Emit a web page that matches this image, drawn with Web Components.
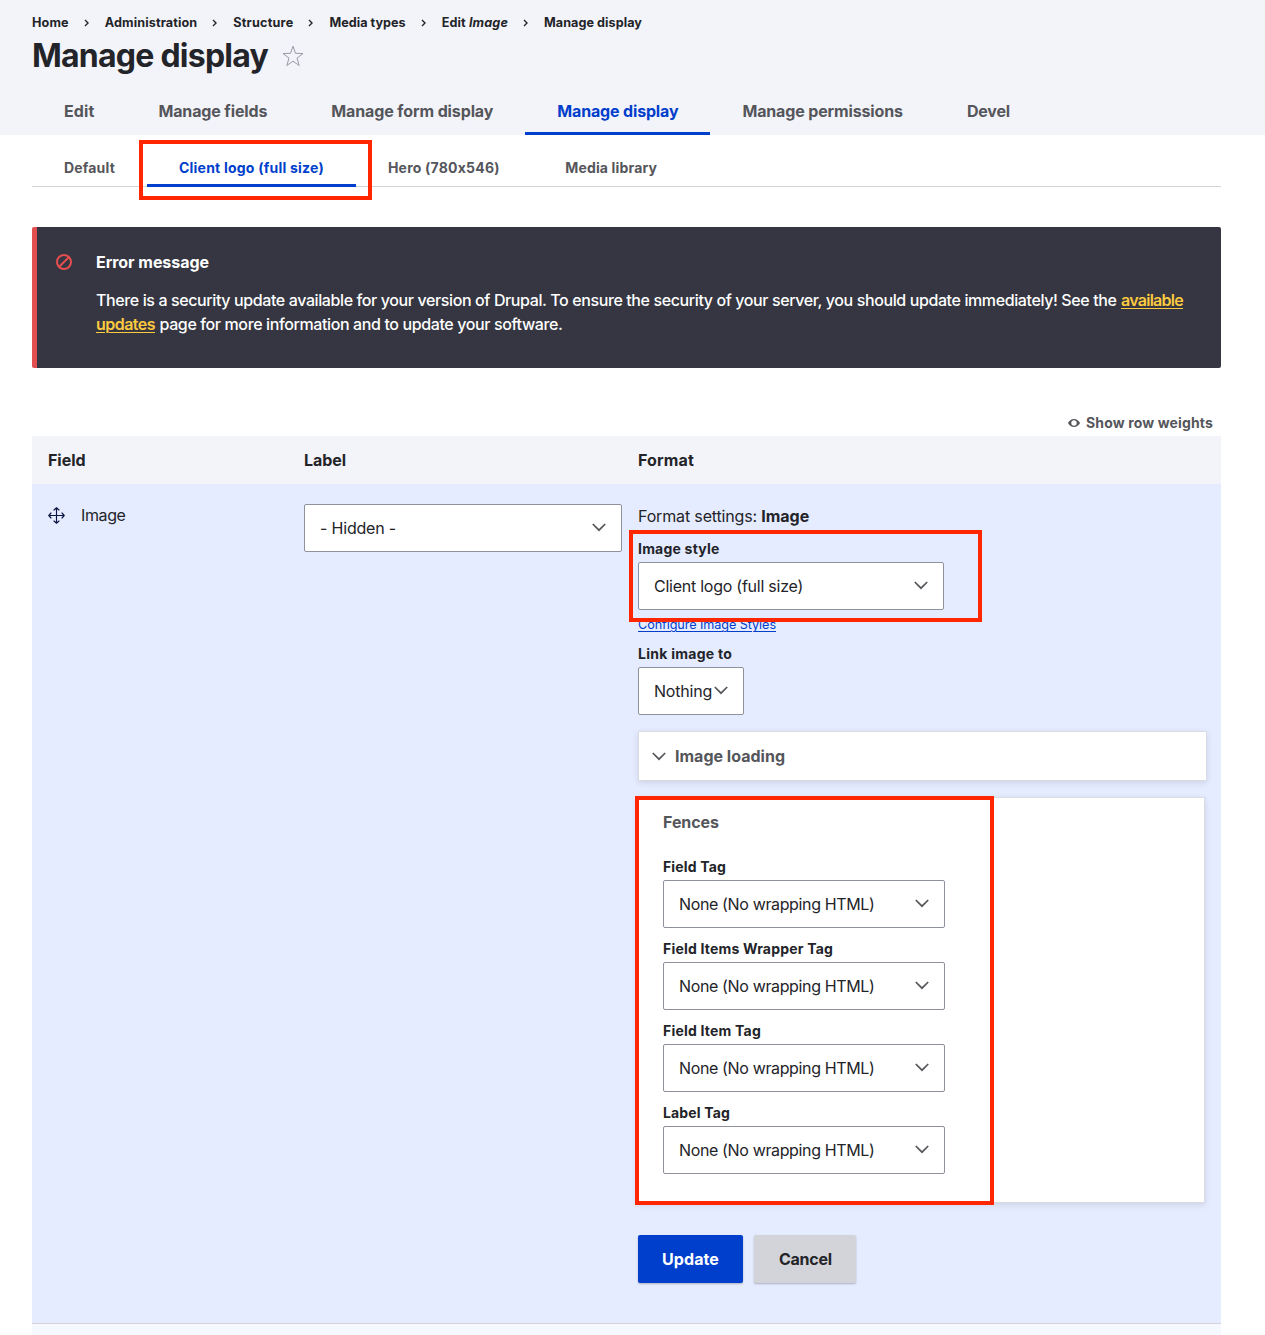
<!DOCTYPE html>
<html lang="en">
<head>
<meta charset="utf-8">
<title>Manage display</title>
<style>
  html, body { margin: 0; background: #fff; }
  body { font-family: Inter, "Liberation Sans", sans-serif; font-size: 16px; line-height: 24px; color: #232429; height: 1335px; overflow: hidden; }
</style>
</head>
<body>
<manage-display-page></manage-display-page>
<script>
const html = (css, markup) => {
  const t = document.createElement('template');
  t.innerHTML = `<style>*{box-sizing:border-box}${css}</style>${markup}`;
  return t;
};
const define = (name, template, setup) => customElements.define(name, class extends HTMLElement {
  constructor() {
    super();
    this.attachShadow({ mode: 'open' }).append(template.content.cloneNode(true));
  }
  connectedCallback() { if (setup) setup(this, this.shadowRoot); }
});

const chevron = '<svg width="14" height="9" viewBox="0 0 14 9" fill="none" stroke="#55565b" stroke-width="1.7"><path d="M0.8 1 7 7.2 13.2 1"/></svg>';

define('manage-display-page', html(`
  :host { display: block; }
  main { display: block; padding: 0 44px 0 32px; }
  status-message { margin-top: 40px; }
  .weights { display: flex; justify-content: flex-end; align-items: center; gap: 6px; padding-right: 8px; height: 26px; margin-top: 42px; font-size: 14px; font-weight: 700; color: #55565b; }
  .grid { display: grid; grid-template-columns: 256px 334px 1fr; padding-left: 16px; }
  .head { background: #f3f4f9; height: 48px; align-items: center; font-weight: 700; }
  .row { background: #e6ecff; height: 840px; border-bottom: 1px solid #d3d4d9; padding-top: 20px; align-items: start; }
  .next { background: #f5f8ff; height: 11px; }
  .name { display: flex; align-items: center; gap: 16px; height: 22px; }
  .format { display: flex; flex-direction: column; align-items: flex-start; padding-right: 16px; }
  .style { position: relative; margin-top: 12px; }
  .config { display: block; font-size: 12.640px; line-height: 18px; height: 18px; margin-top: 6px; color: #003ecc; text-decoration: underline; text-underline-offset: 2px; text-decoration-thickness: 1px; }
  .link { margin-top: 11px; }
  .loading { align-self: stretch; margin: 17px -1px 0 1px; height: 48px; display: flex; align-items: center; gap: 9px; padding-left: 13px; font-weight: 700; color: #55565b; }
  .fences { position: relative; align-self: stretch; margin: 18px 1px 0 0; height: 404px; padding: 12px 25px; display: flex; flex-direction: column; align-items: flex-start; }
  .fences h3 { margin: 0 0 24px; font-size: 16px; line-height: 24px; color: #55565b; }
  .fences field-select + field-select { margin-top: 12px; }
  .actions { display: flex; gap: 11.400px; margin-top: 33px; }
`, `
  <page-header></page-header>
  <main>
    <secondary-tabs></secondary-tabs>
    <status-message></status-message>
    <div class="weights">
      <svg width="12" height="8" viewBox="0 0 12 8"><path fill="#55565b" fill-rule="evenodd" d="M6 0C3.2 0 1 1.7 0 4c1 2.300 3.200 4 6 4s5-1.700 6-4C11 1.700 8.800 0 6 0zM6 1.300a2.700 2.700 0 1 1 0 5.400 2.700 2.700 0 0 1 0-5.400z"/></svg>
      <text-run w="127">Show row weights</text-run>
    </div>
    <div class="grid head"><span><text-run w="37.500">Field</text-run></span><span><text-run w="42">Label</text-run></span><span><text-run w="56">Format</text-run></span></div>
    <div class="grid row">
      <div class="name">
        <svg width="17" height="17" viewBox="0 0 17 17" fill="none" stroke="#0a1440" stroke-width="1.150" stroke-linecap="round" stroke-linejoin="round"><path d="M8.500.8v15.400M.8 8.500h15.400M6 3 8.500.8 11 3M6 14l2.500 2.200L11 14M3 6 .8 8.500 3 11M14 6l2.200 2.500L14 11"/></svg>
        <text-run w="44.500">Image</text-run>
      </div>
      <field-select w="318" value="- Hidden -" vw="76"></field-select>
      <div class="format">
        <div><text-run w="119">Format settings:</text-run><text-run w="48" style="font-weight:700;margin-left:4.200px">Image</text-run></div>
        <div class="style">
          <field-select label="Image style" lw="81.500" w="306" value="Client logo (full size)" vw="149"></field-select>
          <text-run class="config" w="138">Configure Image Styles</text-run>
          <callout-box style="left:-9px;top:-10px;width:353px;height:92px"></callout-box>
        </div>
        <field-select class="link" label="Link image to" lw="94" w="106" value="Nothing" vw="58"></field-select>
        <detail-card class="loading">${chevron}<text-run w="110">Image loading</text-run></detail-card>
        <detail-card class="fences">
          <h3><text-run w="56">Fences</text-run></h3>
          <field-select label="Field Tag" lw="63" w="282" value="None (No wrapping HTML)" vw="195.500"></field-select>
          <field-select label="Field Items Wrapper Tag" lw="170" w="282" value="None (No wrapping HTML)" vw="195.500"></field-select>
          <field-select label="Field Item Tag" lw="98" w="282" value="None (No wrapping HTML)" vw="195.500"></field-select>
          <field-select label="Label Tag" lw="67" w="282" value="None (No wrapping HTML)" vw="195.500"></field-select>
          <callout-box style="left:-3px;top:-2px;width:359px;height:409px"></callout-box>
        </detail-card>
        <div class="actions">
          <action-button primary style="width:105px"><text-run w="57">Update</text-run></action-button>
          <action-button style="width:102px"><text-run w="53">Cancel</text-run></action-button>
        </div>
      </div>
    </div>
    <div class="next"></div>
  </main>
`));

define('page-header', html(`
  :host { display: block; height: 135px; background: #f3f4f9; padding: 12px 32px 0; font-weight: 700; }
  nav { display: flex; height: 20px; line-height: 21px; font-size: 12.640px; align-items: center; }
  nav svg { width: 36px; height: 8px; position: relative; top: 1px; }
  h1 { display: flex; align-items: center; gap: 14px; margin: 3px 0 0; height: 42px; font-size: 32px; line-height: 42px; }
  .tabs { display: flex; margin-top: 11px; }
`, `
  <nav></nav>
  <h1><text-run w="236">Manage display</text-run>
    <svg width="22" height="22" viewBox="0 0 22 22" fill="none" stroke="#9a9ba3" stroke-width="1"><path d="M11 1.200 13.500 8.300 21 8.500 15 13.100 17.200 20.500 11 16.200 4.800 20.500 7 13.100 1 8.500 8.500 8.300z"/></svg>
  </h1>
  <div class="tabs">
    <tab-item w="30.400">Edit</tab-item><tab-item w="108.900">Manage fields</tab-item><tab-item w="162">Manage form display</tab-item><tab-item w="121.100" active>Manage display</tab-item><tab-item w="160.500">Manage permissions</tab-item><tab-item w="43">Devel</tab-item>
  </div>
`), (host, root) => {
  const sep = '<svg viewBox="0 0 36 8" fill="none" stroke="#232429" stroke-width="1.400"><path d="M16 1 19 4 16 7"/></svg>';
  root.querySelector('nav').innerHTML = [['Home', 36.7], ['Administration', 92.6], ['Structure', 60.1], ['Media types', 76.3], ['Edit <i>Image</i>', 66.3], ['Manage display', 98]]
    .map(([t, w]) => `<text-run w="${w}">${t}</text-run>`).join(sep);
});

define('secondary-tabs', html(`
  :host { display: flex; position: relative; height: 52px; padding-top: 14px; border-bottom: 1px solid #d3d4d9; font-size: 14px; }
  tab-item { height: 38px; --tab-line: 38px; }
`, `
  <tab-item w="51">Default</tab-item><tab-item w="144.900" active>Client logo (full size)</tab-item><tab-item w="113.300">Hero (780x546)</tab-item><tab-item w="92">Media library</tab-item>
  <callout-box style="left:107px;top:5px;width:233px;height:60px"></callout-box>
`));

define('tab-item', html(`
  :host { display: block; height: 47px; padding: 0 32px; line-height: var(--tab-line, 46px); font-weight: 700; color: #55565b; border-bottom: 3px solid transparent; }
  :host([active]) { color: #003ecc; border-bottom-color: #003ecc; }
`, '<text-run><slot></slot></text-run>'), (host, root) => {
  root.querySelector('text-run').setAttribute('w', host.getAttribute('w'));
});

define('status-message', html(`
  :host { display: flex; gap: 24px; height: 141px; padding: 23px 0 0 19px; background: #353641; border-left: 5px solid #e34f4f; border-radius: 2px; color: #fff; font-weight: 500; }
  svg { flex: none; margin-top: 4px; }
  h2 { margin: 0 0 14px; font-size: 16px; line-height: 24px; }
  p { margin: 0; height: 24px; display: flex; gap: 4.500px; }
  .a { color: #fdca40; text-decoration: underline; text-underline-offset: 2px; text-decoration-thickness: 1px; font-weight: 600; }
`, `
  <svg width="16" height="16" viewBox="0 0 16 16" fill="none" stroke="#e34f4f" stroke-width="2"><circle cx="8" cy="8" r="7"/><path d="M3.200 12.800 12.800 3.200"/></svg>
  <div>
    <h2><text-run w="113">Error message</text-run></h2>
    <p><text-run w="1020.500">There is a security update available for your version of Drupal. To ensure the security of your server, you should update immediately! See the</text-run><text-run class="a" w="62">available</text-run></p>
    <p><text-run class="a" w="59">updates</text-run><text-run w="403">page for more information and to update your software.</text-run></p>
  </div>
`));

define('field-select', html(`
  :host { display: block; }
  .label { height: 18px; line-height: 18px; margin-bottom: 4px; font-size: 14px; font-weight: 700; }
  .box { display: flex; align-items: center; justify-content: space-between; height: 48px; padding: 0 15px; background: #fff; border: 1px solid #8e929c; border-radius: 2px; font-weight: 400; }
  svg { flex: none; position: relative; top: -1px; }
`, '<div class="label"></div><div class="box"><text-run></text-run>' + chevron + '</div>'), (host, root) => {
  const label = root.querySelector('.label');
  if (host.hasAttribute('label')) label.innerHTML = `<text-run w="${host.getAttribute('lw')}">${host.getAttribute('label')}</text-run>`;
  else label.remove();
  root.querySelector('.box').style.width = host.getAttribute('w') + 'px';
  const value = root.querySelector('.box text-run');
  value.textContent = host.getAttribute('value');
  value.setAttribute('w', host.getAttribute('vw'));
});

define('detail-card', html(`
  :host { display: block; background: #fff; box-shadow: 0 0 0 1px rgba(216,217,224,.8), 0 2px 6px 1px rgba(34,35,48,.12); }
`, '<slot></slot>'));

define('action-button', html(`
  :host { display: flex; align-items: center; justify-content: center; height: 48px; background: #d3d4d9; border-radius: 2px; font-weight: 700; box-shadow: 0 1px 2px rgba(0,0,0,.25); }
  :host([primary]) { background: #003ecc; color: #fff; }
`, '<slot></slot>'));

define('callout-box', html(`
  :host { display: block; position: absolute; z-index: 2; border: 4px solid #ff2600; pointer-events: none; }
`, ''));

/* Spaces its letters so that the run takes exactly the width given in "w". */
define('text-run', html(`
  :host { display: inline-block; white-space: nowrap; flex: none; }
`, '<span><slot></slot></span>'), (host, root) => {
  const slot = root.querySelector('slot');
  const text = slot.assignedNodes({ flatten: true }).map(n => n.textContent).join('');
  const w = parseFloat(host.getAttribute('w'));
  const natural = root.querySelector('span').getBoundingClientRect().width;
  if (w && text.length) {
    host.style.letterSpacing = (w - natural) / text.length + 'px';
    host.style.width = w + 'px';
  }
});
</script>
</body>
</html>
